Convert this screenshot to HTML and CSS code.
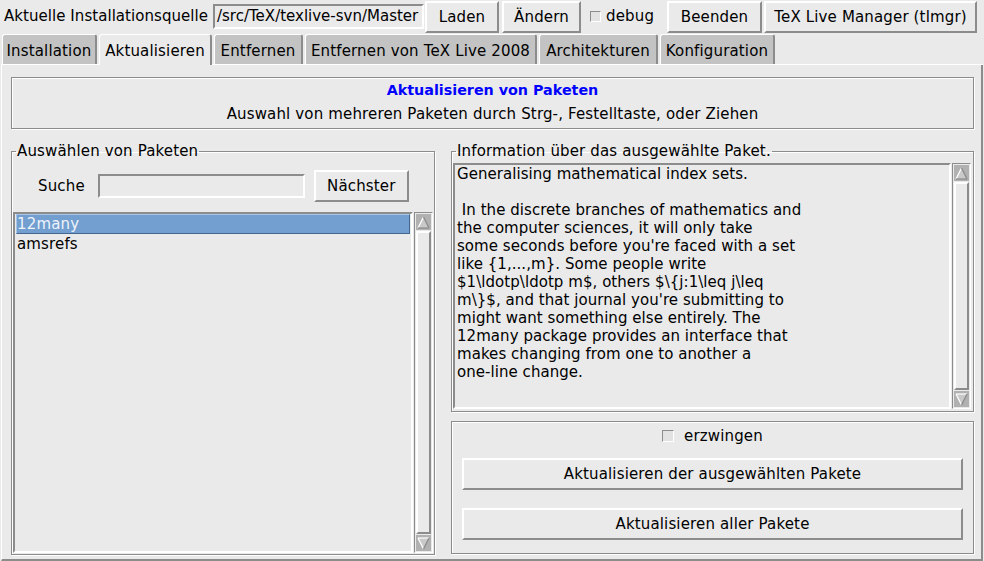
FILE: index.html
```html
<!DOCTYPE html>
<html lang="de">
<head>
<meta charset="utf-8">
<title>TeX Live Manager</title>
<link rel="stylesheet" href="styles.css">
</head>
<body>
<div class="app">
  <div class="topbar">
    <span class="src-lbl">Aktuelle Installationsquelle</span>
    <div class="entry src-entry">/src/TeX/texlive-svn/Master</div>
    <div class="btn b-laden">Laden</div>
    <div class="btn b-aendern">Ändern</div>
    <div class="check top-check"><span class="box"></span><span>debug</span></div>
    <div class="btn b-beenden">Beenden</div>
    <div class="btn b-tlmgr">TeX Live Manager (tlmgr)</div>
  </div>

  <div class="tabs">
    <div class="tab t-inst">Installation</div>
    <div class="tab t-akt active">Aktualisieren</div>
    <div class="tab t-entf">Entfernen</div>
    <div class="tab t-entf08">Entfernen von TeX Live 2008</div>
    <div class="tab t-arch">Architekturen</div>
    <div class="tab t-konf">Konfiguration</div>
  </div>

  <div class="pane">
    <div class="header">
      <div class="title">Aktualisieren von Paketen</div>
      <div class="subtitle">Auswahl von mehreren Paketen durch Strg-, Festelltaste, oder Ziehen</div>
    </div>

    <div class="columns">
      <fieldset class="group pick">
        <legend>Auswählen von Paketen</legend>
        <div class="search">
          <span class="search-lbl">Suche</span>
          <div class="entry search-entry"></div>
          <div class="btn b-next">Nächster</div>
        </div>
        <div class="listwrap">
          <div class="listbox">
            <div class="item sel">12many</div>
            <div class="item">amsrefs</div>
          </div>
          <div class="sb">
            <div class="arr"><svg width="13" height="13" viewBox="0 0 13 13"><polygon points="6.5,1 12,12 1,12" fill="#c9c9c9"/><line x1="1" y1="12" x2="6.5" y2="1" stroke="#fff" stroke-width="1.2"/><line x1="6.5" y1="1" x2="12" y2="12" stroke="#8a8a8a" stroke-width="1.2"/><line x1="1" y1="12" x2="12" y2="12" stroke="#8a8a8a" stroke-width="1.2"/></svg></div>
            <div class="slider"></div>
            <div class="arr"><svg width="13" height="13" viewBox="0 0 13 13"><polygon points="1,1 12,1 6.5,12" fill="#c9c9c9"/><line x1="1" y1="1" x2="12" y2="1" stroke="#fff" stroke-width="1.2"/><line x1="1" y1="1" x2="6.5" y2="12" stroke="#fff" stroke-width="1.2"/><line x1="12" y1="1" x2="6.5" y2="12" stroke="#8a8a8a" stroke-width="1.2"/></svg></div>
          </div>
        </div>
      </fieldset>

      <div class="right">
        <fieldset class="group info">
          <legend>Information über das ausgewählte Paket.</legend>
          <div class="infowrap">
            <div class="textbox">Generalising mathematical index sets.

 In the discrete branches of mathematics and
the computer sciences, it will only take
some seconds before you're faced with a set
like {1,...,m}. Some people write
$1\ldotp\ldotp m$, others $\{j:1\leq j\leq
m\}$, and that journal you're submitting to
might want something else entirely. The
12many package provides an interface that
makes changing from one to another a
one-line change.</div>
            <div class="sb">
              <div class="arr"><svg width="13" height="13" viewBox="0 0 13 13"><polygon points="6.5,1 12,12 1,12" fill="#c9c9c9"/><line x1="1" y1="12" x2="6.5" y2="1" stroke="#fff" stroke-width="1.2"/><line x1="6.5" y1="1" x2="12" y2="12" stroke="#8a8a8a" stroke-width="1.2"/><line x1="1" y1="12" x2="12" y2="12" stroke="#8a8a8a" stroke-width="1.2"/></svg></div>
              <div class="slider"></div>
              <div class="arr"><svg width="13" height="13" viewBox="0 0 13 13"><polygon points="1,1 12,1 6.5,12" fill="#c9c9c9"/><line x1="1" y1="1" x2="12" y2="1" stroke="#fff" stroke-width="1.2"/><line x1="1" y1="1" x2="6.5" y2="12" stroke="#fff" stroke-width="1.2"/><line x1="12" y1="1" x2="6.5" y2="12" stroke="#8a8a8a" stroke-width="1.2"/></svg></div>
            </div>
          </div>
        </fieldset>

        <div class="group actions">
          <div class="check act-check"><span class="box"></span><span>erzwingen</span></div>
          <div class="btn wide b-sel">Aktualisieren der ausgewählten Pakete</div>
          <div class="btn wide b-all">Aktualisieren aller Pakete</div>
        </div>
      </div>
    </div>
  </div>
</div>
</body>
</html>
```

FILE: styles.css
```css
* { box-sizing: border-box; }

html, body {
  margin: 0;
  padding: 0;
}

body {
  background: #eaeaea;
  font-family: "DejaVu Sans", "Noto Sans", sans-serif;
  font-size: 15px;
  line-height: 18px;
  letter-spacing: 0.15px;
  color: #000;
  overflow: hidden;
}

.app {
  width: 984px;
  height: 561px;
  display: flex;
  flex-direction: column;
}

/* ---------- top bar ---------- */
.topbar {
  height: 33px;
  display: flex;
  align-items: flex-start;
  padding-left: 4px;
}

.src-lbl {
  width: 204px;
  margin-top: 7px;
  white-space: nowrap;
  letter-spacing: 0.05px;
}

.entry {
  border: 2px solid;
  border-color: #8c8c8c #fff #fff #8c8c8c;
  background: #eaeaea;
  white-space: nowrap;
  overflow: hidden;
}

.src-entry {
  margin-left: 5px;
  margin-top: 4px;
  width: 211px;
  height: 25px;
  padding: 1px 0 0 2px;
  letter-spacing: 0;
}

.btn {
  height: 32px;
  border: 2px solid;
  border-color: #fff #8c8c8c #8c8c8c #fff;
  padding: 5px 11px 0;
  white-space: nowrap;
  text-align: center;
}

.topbar .btn { margin-top: 1px; }

.b-laden { margin-left: 1px; width: 74px; padding: 5px 0 0; }
.b-aendern { margin-left: 3px; width: 79px; padding: 5px 0 0; }
.b-beenden { margin-left: 9px; width: 95px; padding: 5px 0 0; }
.b-tlmgr { margin-left: 2px; width: 213px; padding: 5px 0 0; }

.check {
  display: flex;
  align-items: center;
  white-space: nowrap;
}

.check .box {
  width: 12px;
  height: 12px;
  border: 1px solid;
  border-color: #8c8c8c #fff #fff #8c8c8c;
  background: #e2e2e2;
  margin-right: 7px;
}

.top-check {
  width: 68px;
  margin-left: 9px;
  margin-top: 7px;
}

.top-check .box {
  width: 11px;
  height: 11px;
  margin-right: 5px;
}

/* ---------- tabs ---------- */
.tabs {
  height: 32px;
  margin: 0 1px;
  padding: 1px 0 0 1px;
  display: flex;
  align-items: stretch;
  gap: 2px;
  border-bottom: 1px solid #fff;
}

.tab {
  background: #c3c3c3;
  border-top: 1px solid #fff;
  border-left: 1px solid #fff;
  border-right: 2px solid #8c8c8c;
  border-radius: 3px 3px 0 0;
  padding: 7px 0 0;
  white-space: nowrap;
  text-align: center;
}

.tab.active {
  background: #eaeaea;
  margin-bottom: -1px;
}

.t-inst { width: 95px; }
.t-akt { width: 113px; }
.t-entf { width: 89px; }
.t-entf08 { width: 232px; }
.t-arch { width: 119px; }
.t-konf { width: 115px; }

/* ---------- pane ---------- */
.pane {
  flex: 1;
  margin: 0 1px;
  border-left: 1px solid #fff;
  border-right: 2px solid #8c8c8c;
  border-bottom: 2px solid #8c8c8c;
  padding: 12px 7px 4px 9px;
  display: flex;
  flex-direction: column;
}

.header {
  height: 52px;
  border: 1px solid #8c8c8c;
  box-shadow: inset 1px 1px 0 #fff, 1px 1px 0 #fff;
  padding-top: 3px;
  text-align: center;
}

.title {
  color: #0000ff;
  font-weight: bold;
  font-size: 14.3px;
  letter-spacing: 0;
}

.subtitle {
  margin-top: 6px;
}

.columns {
  margin-top: 13px;
  flex: 1;
  display: flex;
  gap: 16px;
}

.group {
  margin: 0;
  border: 1px solid #8c8c8c;
  box-shadow: inset 1px 1px 0 #fff, 1px 1px 0 #fff;
  min-width: 0;
}

.group legend {
  padding: 0 1px;
  margin-left: 3px;
  line-height: 18px;
}

/* left group */
.pick {
  width: 424px;
  padding: 0 1px 1px 1px;
  display: flex;
  flex-direction: column;
}

.search {
  margin-top: 10px;
  height: 32px;
  display: flex;
  align-items: center;
}

.search-lbl {
  margin-left: 25px;
}

.search-entry {
  margin-left: 13px;
  width: 207px;
  height: 24px;
}

.b-next {
  margin-left: 9px;
  width: 95px;
  padding: 5px 0 0;
}

.listwrap {
  margin-top: 10px;
  flex: 1;
  display: flex;
  gap: 1px;
}

.listbox {
  flex: 1;
  border: 2px solid;
  border-color: #8c8c8c #fff #fff #8c8c8c;
  padding: 0 1px;
}

.item {
  height: 20px;
  padding: 1px 0 0 1px;
  white-space: nowrap;
}

.item.sel {
  background: #729fcf;
  color: #eef3fb;
  border: 1px solid;
  border-color: #a9c5ea #45678f #45678f #a9c5ea;
  padding: 0;
}

/* scrollbars */
.sb {
  width: 19px;
  display: flex;
  flex-direction: column;
  border: 1px solid;
  border-color: #8c8c8c #fff #fff #8c8c8c;
  padding: 1px;
}

.arr {
  height: 16px;
  background: #b1b1b1;
  display: flex;
  align-items: center;
  justify-content: center;
}

.slider {
  flex: 1;
  margin: 1px 0;
  border: 2px solid;
  border-color: #fff #8c8c8c #8c8c8c #fff;
}

/* right column */
.right {
  width: 523px;
  display: flex;
  flex-direction: column;
  gap: 9px;
}

.info {
  height: 270px;
  padding: 3px 2px 2px 1px;
}

.infowrap {
  height: 246px;
  display: flex;
  gap: 1px;
}

.textbox {
  flex: 1;
  border: 2px solid;
  border-color: #8c8c8c #fff #fff #8c8c8c;
  padding: 0 2px;
  white-space: pre;
  overflow: hidden;
  letter-spacing: 0.05px;
}

.actions {
  height: 133px;
  padding: 5px 10px 0;
  display: flex;
  flex-direction: column;
}

.act-check {
  justify-content: center;
  height: 18px;
}

.act-check .box {
  margin-right: 10px;
}

.wide {
  width: 100%;
}

.b-sel { margin-top: 13px; }
.b-all { margin-top: 18px; }
```
